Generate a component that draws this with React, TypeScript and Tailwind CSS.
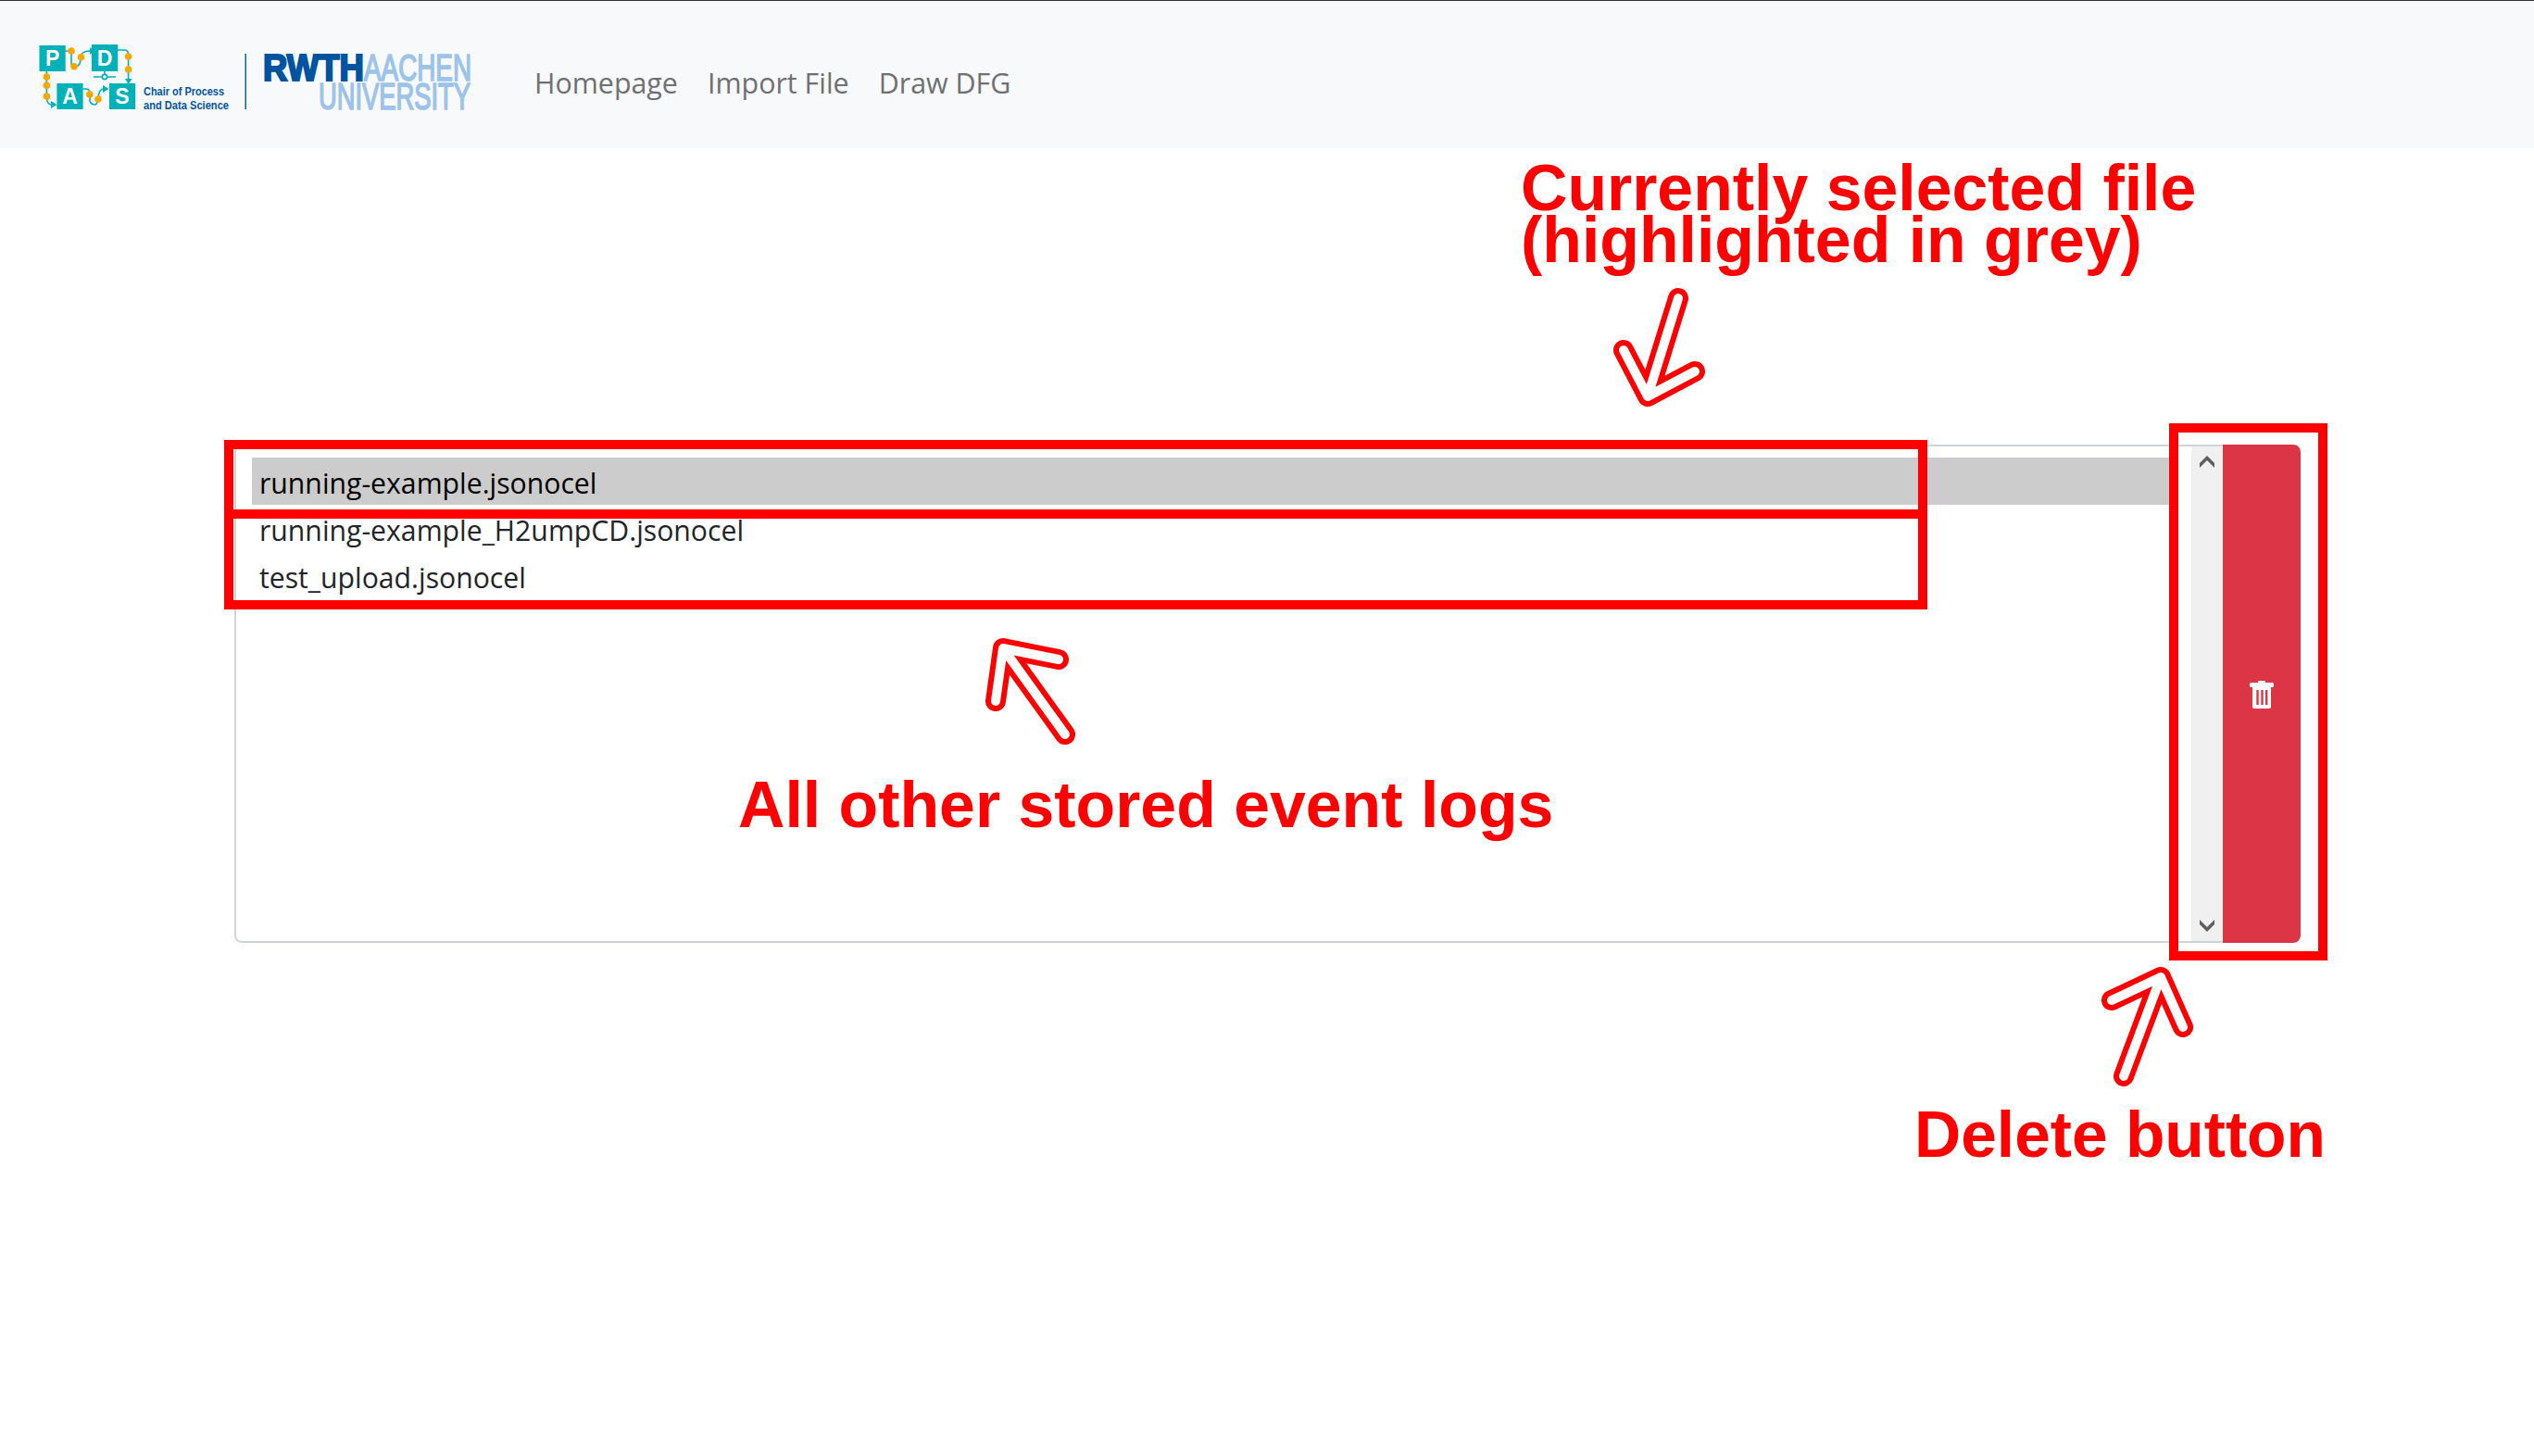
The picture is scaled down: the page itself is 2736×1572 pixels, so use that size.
import React from "react";

const files = [
  "running-example.jsonocel",
  "running-example_H2umpCD.jsonocel",
  "test_upload.jsonocel",
];

const arrows = [
  "M1812 322 L1779 428 M1753 378 L1779 428 L1830 401",
  "M1150 793 L1083 700 M1075 757 L1083 700 L1143 712",
  "M2293 1162 L2333 1055 M2280 1080 L2333 1055 L2357 1109",
];

function Logo() {
  const dots = [
    [77, 54], [87.5, 60.7], [80, 70.7], [138.6, 60], [138.6, 74],
    [50.4, 82], [50.4, 91.3], [50.4, 103], [96.8, 101], [106, 106],
  ];
  return (
    <svg viewBox="0 0 540 159" className="w-[540px] h-[159px] shrink-0">
      <g fill="#00b1ba">
        <rect x="42.5" y="48" width="28.2" height="28" />
        <rect x="99" y="47" width="28.2" height="29" />
        <rect x="61.4" y="89" width="28.2" height="28" />
        <rect x="118" y="89" width="28.2" height="28" />
        <path d="M97 50 L102 54 L97 58 Z" />
        <path d="M135 84 H142.5 L138.7 90 Z" />
        <path d="M55 108 L61.5 112 L55 116 Z" />
        <path d="M111 91 L117.5 95 L111 99 Z" />
      </g>
      <g fill="none" stroke="#00b1ba" strokeWidth="1.6">
        <path d="M70 54 H75 Q77 54 77 57 V68 Q78 72 82 71 Q87 70 87 62 Q87 54 97 54" />
        <path d="M127 53 H134 Q138.6 53 138.6 58 V85" />
        <path d="M50.4 76 V105 Q51 112 56 112" />
        <path d="M89 95 H93 Q97 95 97 100 V108 Q98 112 103 112 Q106 110 106 104 Q107 95 112 95" />
        <path d="M101 82 H125 M113 76 V79" />
        <circle cx="113" cy="82" r="2.6" fill="#f8f9fa" />
      </g>
      <g fill="#f5a800">
        {dots.map(([cx, cy]) => (
          <circle key={`${cx}-${cy}`} cx={cx} cy={cy} r="3.8" />
        ))}
      </g>
      <g fill="#ffffff" fontFamily="'Liberation Sans', sans-serif" fontWeight="700" fontSize="23" textAnchor="middle">
        <text x="56.6" y="70">P</text>
        <text x="113" y="70">D</text>
        <text x="75.5" y="111">A</text>
        <text x="132" y="111">S</text>
      </g>
      <g fill="#00549f" fontFamily="'Liberation Sans Narrow', 'Liberation Sans', sans-serif" fontWeight="700" fontSize="13.5">
        <text x="155" y="102" textLength="87" lengthAdjust="spacingAndGlyphs">Chair of Process</text>
        <text x="155" y="116.5" textLength="92" lengthAdjust="spacingAndGlyphs">and Data Science</text>
      </g>
      <rect x="264.5" y="57" width="1.4" height="60" fill="#00549f" />
      <g fontFamily="'Liberation Sans Narrow', 'Liberation Sans', sans-serif" fontSize="40">
        <text x="284" y="86" textLength="109" lengthAdjust="spacingAndGlyphs" fill="#00549f" stroke="#00549f" strokeWidth="2.2" fontWeight="700">RWTH</text>
        <text x="393" y="86" textLength="116" lengthAdjust="spacingAndGlyphs" fill="#9cc3e9" stroke="#9cc3e9" strokeWidth="1.7">AACHEN</text>
        <text x="344" y="117" textLength="164" lengthAdjust="spacingAndGlyphs" fill="#9cc3e9" stroke="#9cc3e9" strokeWidth="1.7">UNIVERSITY</text>
      </g>
    </svg>
  );
}

function TrashIcon() {
  return (
    <svg viewBox="0 0 26 30" className="w-[26px] h-[30px] mt-[2px]" fill="#ffffff">
      <path d="M9 1 Q9 0 10 0 H16 Q17 0 17 1 V2 H24.5 Q26 2 26 3.5 V5.5 Q26 7 24.5 7 H23 V28 Q23 30 21 30 H5 Q3 30 3 28 V7 H1.5 Q0 7 0 5.5 V3.5 Q0 2 1.5 2 H9 Z M7.3 10 V26 H9.7 V10 Z M12.3 10 V26 H14.7 V10 Z M17 10 V26 H19.4 V10 Z" fillRule="evenodd" />
    </svg>
  );
}

function Annotations() {
  return (
    <>
      <div className="absolute left-[242px] top-[475px] w-[1839px] h-[85px] border-[10px] border-[#ff0000]" />
      <div className="absolute left-[242px] top-[550px] w-[1839px] h-[108px] border-[10px] border-[#ff0000]" />
      <div className="absolute left-[2342px] top-[457px] w-[171px] h-[580px] border-[10px] border-[#ff0000]" />
      <svg viewBox="0 0 2736 1572" className="absolute left-0 top-0 w-[2736px] h-[1572px] pointer-events-none" fill="none" strokeLinecap="round" strokeLinejoin="round">
        {arrows.map((d) => (
          <g key={d}>
            <path d={d} stroke="#ff0000" strokeWidth="22" />
            <path d={d} stroke="#ffffff" strokeWidth="10" />
          </g>
        ))}
      </svg>
      <div className="absolute left-[1642px] top-[175px] text-[69.8px] leading-[56px] font-bold text-[#ff0000] font-['Liberation_Sans',sans-serif] whitespace-nowrap">
        <div>Currently selected file</div>
        <div>(highlighted in grey)</div>
      </div>
      <div className="absolute left-[797px] top-[829px] text-[69.8px] leading-[80px] font-bold text-[#ff0000] font-['Liberation_Sans',sans-serif] whitespace-nowrap">
        All other stored event logs
      </div>
      <div className="absolute left-[2067px] top-[1185px] text-[69.5px] leading-[80px] font-bold text-[#ff0000] font-['Liberation_Sans',sans-serif] whitespace-nowrap">
        Delete button
      </div>
    </>
  );
}

export default function App() {
  return (
    <div className="relative w-[2736px] h-[1572px] overflow-hidden bg-white font-['Open_Sans',sans-serif]">
      <nav className="flex items-center h-[160px] bg-[#f8f9fa] border-t border-[#333333]">
        <Logo />
        <div className="flex items-center gap-[32px] ml-[37px] mt-[18px] text-[30.4px] leading-[48px] text-[#6f7071]">
          <a>Homepage</a>
          <a>Import File</a>
          <a>Draw DFG</a>
        </div>
      </nav>

      <main className="flex h-[538px] ml-[253px] mt-[320px] w-[2231px]">
        <div className="flex flex-1 border-y-2 border-l-2 border-[#ced4da] rounded-l-lg">
          <ul className="flex-1 pl-[17px] pr-[21px] pt-[12px] text-[30.2px] text-[#212529]">
            {files.map((file, i) => (
              <li key={file} className={i === 0 ? "h-[51px] leading-[55px] pl-[8px] bg-[#cccccc] text-black" : "h-[51px] leading-[55px] pl-[8px]"}>
                {file}
              </li>
            ))}
          </ul>
          <div className="flex flex-col justify-between items-center w-[34px] bg-[#f0f0f0] py-[10px]">
            <svg viewBox="0 0 16 13" className="w-[16px] h-[13px]">
              <path d="M0 8 L8 0 L16 8 V13 L8 5 L0 13 Z" fill="#5f5f5f" />
            </svg>
            <svg viewBox="0 0 16 13" className="w-[16px] h-[13px]">
              <path d="M0 0 L8 8 L16 0 V5 L8 13 L0 5 Z" fill="#5f5f5f" />
            </svg>
          </div>
        </div>
        <button className="flex items-center justify-center w-[84px] bg-[#dc3545] text-white rounded-r-lg">
          <TrashIcon />
        </button>
      </main>

      <Annotations />
    </div>
  );
}
